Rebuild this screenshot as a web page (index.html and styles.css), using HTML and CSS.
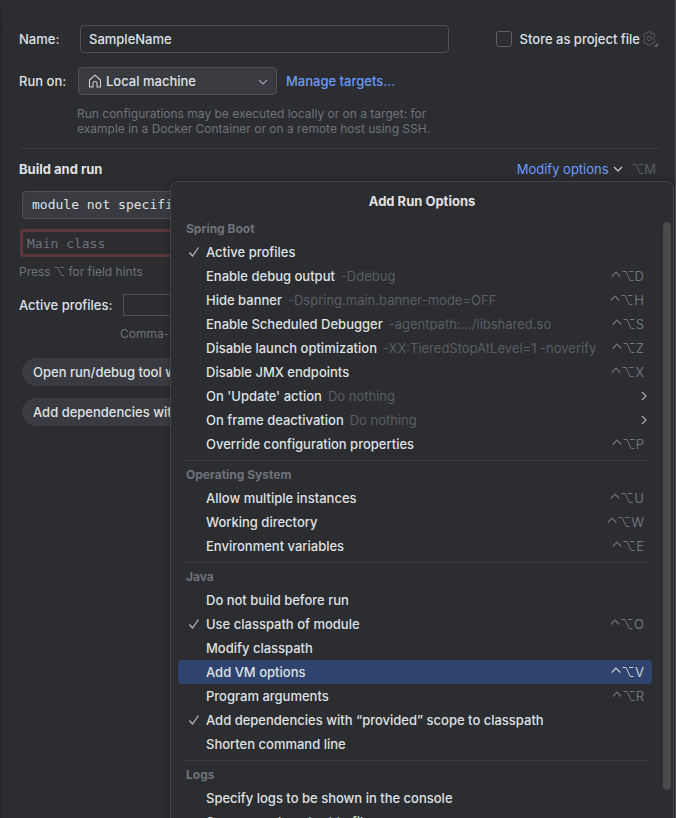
FILE: index.html
```html
<!DOCTYPE html>
<html lang="en">
<head>
<meta charset="utf-8">
<title>Run configuration</title>
<link rel="stylesheet" href="styles.css">
</head>
<body>
<svg width="0" height="0" class="defs" aria-hidden="true">
  <symbol id="check" viewBox="0 0 12 12"><path d="M1.5 6.5 4.5 10 10.5 1.5" fill="none" stroke="currentColor" stroke-width="1.3"/></symbol>
  <symbol id="down" viewBox="0 0 10 6"><path d="M1 1 5 5 9 1" fill="none" stroke="currentColor" stroke-width="1.2"/></symbol>
  <symbol id="right" viewBox="0 0 6 10"><path d="M1 1 5 5 1 9" fill="none" stroke="currentColor" stroke-width="1.4"/></symbol>
  <symbol id="opt" viewBox="0 0 12 10"><path d="M.5 .5H4L8.300 9.500H11.500M7 .5H11.500" fill="none" stroke="currentColor" stroke-width="1"/></symbol>
  <symbol id="ctrl" viewBox="0 0 10 10"><path d="M.8 5.500 5 1.200 9.200 5.500" fill="none" stroke="currentColor" stroke-width="1.200"/></symbol>
</svg>
<main class="dialog">
  <form class="form">
    <div class="row name-row">
      <label class="label" for="name">Name:</label>
      <input class="field" id="name" type="text" value="SampleName">
      <label class="store"><input class="tick" type="checkbox">Store as project file</label>
      <button class="gear" type="button" aria-label="Storage settings">
        <svg width="16" height="16" viewBox="0 0 16 16" fill="none" stroke="currentColor" stroke-linejoin="round"><path d="M5.600 .8h3.200l.7 1.900 2-.4 1.600 2.800-1.300 1.500v1.600l1.300 1.500-1.600 2.800-2-.4-.7 1.900H5.600l-.7-1.900-2 .4-1.600-2.800 1.300-1.500V6.600L1.300 5.100l1.600-2.800 2 .4z"/><circle cx="7.200" cy="7.400" r="2.300"/><path d="M16 11.500v4.500h-4.500z" fill="currentColor" stroke="none"/></svg>
      </button>
    </div>
    <div class="row target-row">
      <label class="label" for="target">Run on:</label>
      <span class="select-wrap">
        <svg class="home" width="14" height="14" viewBox="0 0 14 14" fill="none" stroke="currentColor" stroke-width="1.1"><path d="M1.500 6 7 1.200 12.500 6v7H9V9.500a2 2 0 0 0-4 0V13H1.500z" stroke-linejoin="round"/></svg>
        <select class="select" id="target"><option>Local machine</option></select>
        <svg class="arrow" width="10" height="6"><use href="#down"/></svg>
      </span>
      <a class="link" href="#targets">Manage targets…</a>
    </div>
    <p class="hint target-hint">Run configurations may be executed locally or on a target: for<br>example in a Docker Container or on a remote host using SSH.</p>
    <hr class="rule">
    <div class="row build-row">
      <h2 class="heading">Build and run</h2>
      <a class="link modify" href="#options">Modify options <svg class="modify-arrow" width="10" height="6"><use href="#down"/></svg></a>
      <kbd class="keys"><svg width="12" height="10"><use href="#opt"/></svg>M</kbd>
    </div>
    <select class="select module" aria-label="Module"><option>module not specified</option></select>
    <input class="main-class" type="text" placeholder="Main class" aria-label="Main class">
    <p class="hint field-hint">Press <svg width="11" height="9"><use href="#opt"/></svg> for field hints</p>
    <div class="row profiles-row">
      <label class="label-wide" for="profiles">Active profiles:</label>
      <input class="profiles" id="profiles" type="text">
    </div>
    <p class="hint profiles-hint">Comma-separated list of profiles</p>
    <button class="pill" type="button">Open run/debug tool window when started</button>
    <button class="pill" type="button">Add dependencies with “provided” scope to classpath</button>
  </form>

  <section class="popup" aria-labelledby="popup-title">
    <h2 class="title" id="popup-title">Add Run Options</h2>
    <div class="list">
      <h3 class="group">Spring Boot</h3>
      <button class="item"><svg class="mark" width="12" height="12"><use href="#check"/></svg>Active profiles</button>
      <button class="item">Enable debug output<span class="note">-Ddebug</span><kbd class="keys"><svg width="10" height="10"><use href="#ctrl"/></svg><svg width="12" height="10"><use href="#opt"/></svg>D</kbd></button>
      <button class="item">Hide banner<span class="note">-Dspring.main.banner-mode=OFF</span><kbd class="keys"><svg width="10" height="10"><use href="#ctrl"/></svg><svg width="12" height="10"><use href="#opt"/></svg>H</kbd></button>
      <button class="item">Enable Scheduled Debugger<span class="note">-agentpath:.../libshared.so</span><kbd class="keys"><svg width="10" height="10"><use href="#ctrl"/></svg><svg width="12" height="10"><use href="#opt"/></svg>S</kbd></button>
      <button class="item">Disable launch optimization<span class="note">-XX:TieredStopAtLevel=1 -noverify</span><kbd class="keys"><svg width="10" height="10"><use href="#ctrl"/></svg><svg width="12" height="10"><use href="#opt"/></svg>Z</kbd></button>
      <button class="item">Disable JMX endpoints<kbd class="keys"><svg width="10" height="10"><use href="#ctrl"/></svg><svg width="12" height="10"><use href="#opt"/></svg>X</kbd></button>
      <button class="item">On 'Update' action<span class="note">Do nothing</span><svg class="more" width="6" height="10"><use href="#right"/></svg></button>
      <button class="item">On frame deactivation<span class="note">Do nothing</span><svg class="more" width="6" height="10"><use href="#right"/></svg></button>
      <button class="item">Override configuration properties<kbd class="keys"><svg width="10" height="10"><use href="#ctrl"/></svg><svg width="12" height="10"><use href="#opt"/></svg>P</kbd></button>
      <hr class="divider">
      <h3 class="group">Operating System</h3>
      <button class="item">Allow multiple instances<kbd class="keys"><svg width="10" height="10"><use href="#ctrl"/></svg><svg width="12" height="10"><use href="#opt"/></svg>U</kbd></button>
      <button class="item">Working directory<kbd class="keys"><svg width="10" height="10"><use href="#ctrl"/></svg><svg width="12" height="10"><use href="#opt"/></svg>W</kbd></button>
      <button class="item">Environment variables<kbd class="keys"><svg width="10" height="10"><use href="#ctrl"/></svg><svg width="12" height="10"><use href="#opt"/></svg>E</kbd></button>
      <hr class="divider">
      <h3 class="group">Java</h3>
      <button class="item">Do not build before run</button>
      <button class="item"><svg class="mark" width="12" height="12"><use href="#check"/></svg>Use classpath of module<kbd class="keys"><svg width="10" height="10"><use href="#ctrl"/></svg><svg width="12" height="10"><use href="#opt"/></svg>O</kbd></button>
      <button class="item">Modify classpath</button>
      <button class="item selected">Add VM options<kbd class="keys"><svg width="10" height="10"><use href="#ctrl"/></svg><svg width="12" height="10"><use href="#opt"/></svg>V</kbd></button>
      <button class="item">Program arguments<kbd class="keys"><svg width="10" height="10"><use href="#ctrl"/></svg><svg width="12" height="10"><use href="#opt"/></svg>R</kbd></button>
      <button class="item"><svg class="mark" width="12" height="12"><use href="#check"/></svg>Add dependencies with “provided” scope to classpath</button>
      <button class="item">Shorten command line</button>
      <hr class="divider">
      <h3 class="group">Logs</h3>
      <button class="item">Specify logs to be shown in the console</button>
      <button class="item">Save console output to file</button>
    </div>
    <div class="thumb"></div>
  </section>
</main>
</body>
</html>
```
FILE: styles.css
```css
* { box-sizing: border-box; }
body {
  margin: 0;
  background: #2b2d30;
  color: #dfe1e5;
  font: 500 13px/16px Inter, "Liberation Sans", sans-serif;
}
.defs { position: absolute; }
h2, h3, p { margin: 0; }
button, input, select { font: inherit; color: inherit; }
.dialog {
  position: relative;
  height: 100vh;
  overflow: hidden;
  border-right: 1px solid #4a4c4f;
}
.dialog::before {
  content: "";
  position: absolute;
  left: 1px;
  top: 7px;
  bottom: 0;
  width: 1px;
  background: #1e1f22;
}
.dialog::after {
  content: "";
  position: absolute;
  left: 0;
  top: 31px;
  width: 1px;
  height: 1px;
  background: #1e1f22;
}
.form { padding: 25px 14px 0 19px; }
.row { display: flex; align-items: center; }
.name-row { padding-right: 3px; }
.label { width: 61px; flex: none; }
.field {
  flex: 1;
  min-width: 0;
  height: 28px;
  padding: 0 8px;
  border: 1px solid #4e5157;
  border-radius: 4px;
  background: #2b2d30;
}
.store { display: flex; align-items: center; gap: 8px; margin-left: 47px; }
.tick {
  appearance: none;
  width: 16px;
  height: 16px;
  margin: 0;
  border: 1px solid #5e6167;
  border-radius: 3px;
}
.gear { display: flex; margin-left: 2px; padding: 0; border: 0; background: none; color: #5a5d63; }
.target-row { margin-top: 14px; }
.target-row .label { width: 59px; }
.select-wrap { position: relative; width: 199px; color: #ced0d6; }
.select {
  display: block;
  appearance: none;
  height: 28px;
  border: 1px solid #4e5157;
  border-radius: 4px;
  background: #393b40;
  color: #dfe1e5;
}
.select-wrap .select { width: 100%; padding: 0 27px; }
.home { position: absolute; left: 10px; top: 7px; }
.arrow { position: absolute; right: 9px; top: 12px; color: #9da0a8; }
.link { color: #6b9bfa; text-decoration: none; }
.target-row .link { margin-left: 9px; }
.hint { color: #6f737a; font-size: 12px; line-height: 15px; font-weight: 400; }
.target-hint { margin: 11px 0 0 58px; }
.rule { height: 1px; margin: 12px 0 0; border: 0; background: #393b40; }
.build-row { height: 40px; padding-right: 5px; }
.heading, .title { font-size: 13px; font-weight: 700; }
.modify { margin-left: auto; font-weight: 400; }
.modify-arrow { margin: 0 9px 2px 1px; color: #ced0d6; }
.keys { display: flex; align-items: center; gap: 1px; font: 400 13px/16px Inter, sans-serif; color: #6f737a; }
.build-row .keys { gap: 0; color: #5a5d63; }
.module, .main-class { font-family: "DejaVu Sans Mono", monospace; font-weight: 400; }
.module { width: 300px; margin: 2px 0 0 3px; padding: 0 9px; }
.main-class {
  display: block;
  width: 302px;
  height: 28px;
  margin: 10px 0 0 1px;
  padding: 0 4px;
  border: 3px solid #5e3838;
  border-radius: 3px;
  background: #2b2d30;
}
.main-class::placeholder { color: #6f737a; opacity: 1; }
.field-hint { margin-top: 7px; }
.profiles-row { margin-top: 15px; }
.label-wide { width: 104px; }
.profiles { width: 200px; height: 22px; border: 1px solid #4e5157; background: #2b2d30; }
.profiles-hint { margin: 10px 0 17px 101px; }
.pill {
  display: block;
  height: 28px;
  margin: 0 0 12px 3px;
  padding: 0 11px;
  border: 0;
  border-radius: 14px;
  background: #393b40;
}
.popup {
  position: absolute;
  left: 170px;
  right: 1px;
  top: 181px;
  bottom: -20px;
  overflow: hidden;
  border: 1px solid #43454a;
  border-radius: 8px;
  background: #2b2d30;
  box-shadow: 0 0 6px rgba(0, 0, 0, .3);
}
.title { height: 36px; line-height: 38px; text-align: center; }
.list { padding: 0 21px 0 7px; }
.group { padding-left: 8px; font-size: 12px; font-weight: 700; line-height: 22px; color: #6f737a; }
.item {
  position: relative;
  display: flex;
  align-items: center;
  width: 100%;
  height: 24px;
  padding: 0 8px 0 28px;
  border: 0;
  border-radius: 4px;
  background: none;
  text-align: left;
  white-space: nowrap;
}
.selected { background: #2e436e; }
.mark { position: absolute; left: 10px; top: 6px; color: #b4b8bf; }
.note { margin-left: 6px; font-weight: 400; color: #5a5d63; }
.item .keys, .more { margin-left: auto; }
.more { margin-right: -3px; color: #9da0a8; }
.selected .keys { color: #ced0d6; }
.divider { height: 1px; margin: 4px 4px 3px; border: 0; background: #393b40; }
.thumb {
  position: absolute;
  right: 2px;
  top: 40px;
  width: 8px;
  height: 568px;
  border-radius: 4px;
  background: #4a4b4d;
}
```
